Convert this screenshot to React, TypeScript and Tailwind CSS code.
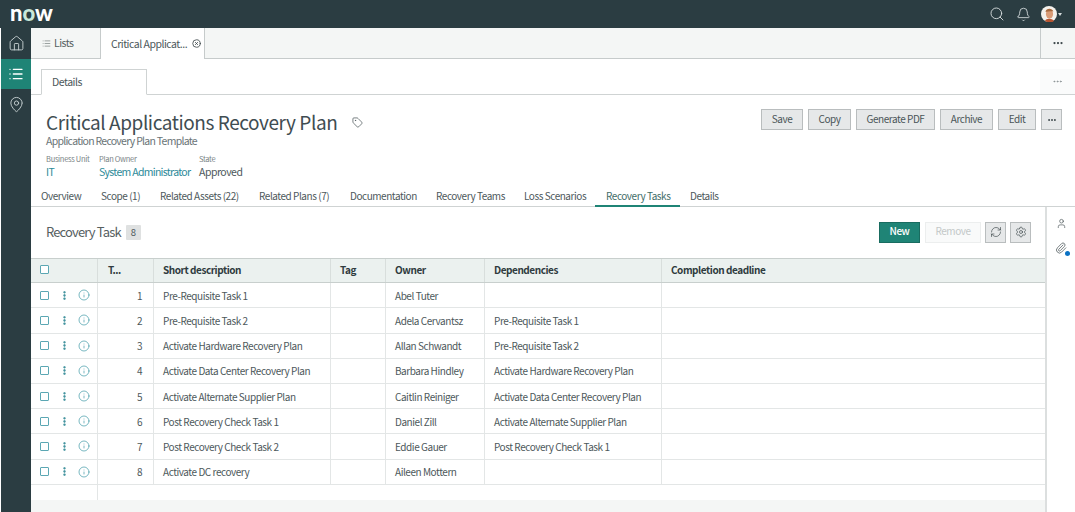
import { Home, List, MapPin, Search, Bell, RefreshCw, Settings, Tag, Paperclip, User, Info, EllipsisVertical, CircleX, Ellipsis } from "lucide-react";

const tabs = [
  { label: "Overview", cls: "w-[60px]" },
  { label: "Scope (1)", cls: "w-[59px]" },
  { label: "Related Assets (22)", cls: "w-[99px]" },
  { label: "Related Plans (7)", cls: "w-[91px]" },
  { label: "Documentation", cls: "w-[86px]" },
  { label: "Recovery Teams", cls: "w-[88px]" },
  { label: "Loss Scenarios", cls: "w-[71px]" },
  { label: "Recovery Tasks", cls: "w-[85px] pl-[11px] mr-[10px] border-b-2 border-[#1f8476] text-[#3f6d68]" },
  { label: "Details", cls: "w-[48px]" },
];

const rows = [
  ["1", "Pre-Requisite Task 1", "Abel Tuter", ""],
  ["2", "Pre-Requisite Task 2", "Adela Cervantsz", "Pre-Requisite Task 1"],
  ["3", "Activate Hardware Recovery Plan", "Allan Schwandt", "Pre-Requisite Task 2"],
  ["4", "Activate Data Center Recovery Plan", "Barbara Hindley", "Activate Hardware Recovery Plan"],
  ["5", "Activate Alternate Supplier Plan", "Caitlin Reiniger", "Activate Data Center Recovery Plan"],
  ["6", "Post Recovery Check Task 1", "Daniel Zill", "Activate Alternate Supplier Plan"],
  ["7", "Post Recovery Check Task 2", "Eddie Gauer", "Post Recovery Check Task 1"],
  ["8", "Activate DC recovery", "Aileen Mottern", ""],
];

const actions = [
  { label: "Save", w: "w-[42px]" },
  { label: "Copy", w: "w-[43px]" },
  { label: "Generate PDF", w: "w-[79px]" },
  { label: "Archive", w: "w-[53px]" },
  { label: "Edit", w: "w-[38px]" },
];

const gridCols = "grid grid-cols-[67px_56px_177px_55px_99px_177px_1fr]";

function Checkbox() {
  return <span className="block w-[9px] h-[9px] shrink-0 border-[1.5px] border-[#5ba7b3] rounded-[1px] bg-white" />;
}

function Avatar() {
  return (
    <svg width="16" height="16" viewBox="0 0 16 16">
      <circle cx="8" cy="8" r="8" fill="#f4f1ec" />
      <ellipse cx="8.5" cy="8" rx="3.6" ry="4.6" fill="#d99b76" />
      <path d="M4.5 6 C5 2 11 1.5 12.4 5.5 C10.5 5 7 5 4.5 6Z" fill="#a8683c" />
      <path d="M4 15 C5 12 11 12 13 15 A8 8 0 0 1 4 15Z" fill="#b6532f" />
    </svg>
  );
}

export default function App() {
  return (
    <div className="w-[1075px] h-[512px] overflow-hidden flex flex-col bg-white text-[#4d585b] text-[10px] tracking-[-0.45px] whitespace-nowrap font-['Noto_Sans_CJK_SC',sans-serif]">
      {/* top bar */}
      <header className="h-[28px] shrink-0 bg-[#2b3d42] flex items-center justify-between pl-[10px] pr-[13px]">
        <div className="text-white font-['Lato',sans-serif] font-black text-[22px] leading-[26px] tracking-[0px] mb-[2px]">
          n<span className="text-[#c9e8da]">o</span>w
        </div>
        <div className="flex items-center text-[#d5dcdd]">
          <Search size={16} strokeWidth={1.4} />
          <Bell size={15} strokeWidth={1.4} className="ml-[11px]" />
          <div className="flex items-center gap-[1px] ml-[10px]">
            <Avatar />
            <span className="w-0 h-0 border-x-[2.5px] border-x-transparent border-t-[3px] border-t-[#d5dcdd]" />
          </div>
        </div>
      </header>

      <div className="flex flex-1 min-h-0">
        {/* sidebar */}
        <aside className="w-[30px] shrink-0 ml-[1px] bg-[#2b3d42] flex flex-col items-center text-[#c9d2d3]">
          <div className="h-[31px] w-full flex items-center justify-center">
            <Home size={17} strokeWidth={1.3} />
          </div>
          <div className="h-[30px] w-full flex items-center justify-center bg-[#1f8476] text-white">
            <List size={16} strokeWidth={2} />
          </div>
          <div className="h-[31px] w-full flex items-center justify-center">
            <MapPin size={17} strokeWidth={1.3} />
          </div>
        </aside>

        <main className="flex-1 min-w-0 flex flex-col">
          {/* workspace tabs */}
          <div className="h-[31px] shrink-0 flex bg-[#f4f6f5] border-b border-[#c6cbcb] text-[10.5px] tracking-[-0.5px]">
            <div className="w-[69px] flex items-center pl-[11px] gap-[3px] text-[#56605f]">
              <List size={9} strokeWidth={1.5} />
              <span>Lists</span>
            </div>
            <div className="w-[105px] h-[31px] flex items-center pl-[10px] gap-[5px] bg-white border-x border-[#c6cbcb]">
              <span>Critical Applicat...</span>
              <CircleX size={9} strokeWidth={2.2} className="text-[#3a4548]" />
            </div>
            <div className="flex-1" />
            <div className="w-[35px] flex items-center justify-center border-l border-[#c6cbcb]">
              <Ellipsis size={12} strokeWidth={2.5} className="text-[#3a4548]" />
            </div>
          </div>

          {/* record tab */}
          <div className="h-[36px] shrink-0 flex items-end justify-between border-b border-[#cfd3d3] pl-[10px]">
            <div className="w-[106px] h-[26px] -mb-[1px] flex items-center pl-[10px] text-[10.5px] tracking-[-0.5px] bg-white border border-b-white border-[#cfd3d3]">
              Details
            </div>
            <div className="w-[35px] h-[25px] flex items-center justify-center bg-[#fafbfb]">
              <Ellipsis size={11} strokeWidth={2} className="text-[#8a9294]" />
            </div>
          </div>

          {/* record header */}
          <div className="h-[76px] shrink-0 flex justify-between pl-[15px] pr-[13px]">
            <div className="pt-[14px]">
              <div className="flex items-center gap-[15px]">
                <h1 className="text-[19px] leading-[26px] tracking-[-0.43px] font-normal text-[#3f4d52]">Critical Applications Recovery Plan</h1>
                <Tag size={11} strokeWidth={1.6} className="text-[#4a5558]" />
              </div>
              <div className="text-[10.5px] tracking-[-0.73px] leading-[14px] -mt-[1px] text-[#6a7477]">Application Recovery Plan Template</div>
              <div className="flex mt-[6px]">
                <div className="w-[53px]">
                  <div className="text-[7.5px] tracking-[-0.3px] leading-[10px] text-[#7a8386]">Business Unit</div>
                  <div className="text-[10.5px] tracking-[-0.7px] leading-[14px] mt-[1px] text-[#2d8a99]">IT</div>
                </div>
                <div className="w-[100px]">
                  <div className="text-[7.5px] tracking-[-0.3px] leading-[10px] text-[#7a8386]">Plan Owner</div>
                  <div className="text-[10.5px] tracking-[-0.7px] leading-[14px] mt-[1px] text-[#2d8a99]">System Administrator</div>
                </div>
                <div>
                  <div className="text-[7.5px] tracking-[-0.3px] leading-[10px] text-[#7a8386]">State</div>
                  <div className="text-[10.5px] tracking-[-0.5px] leading-[14px] mt-[1px]">Approved</div>
                </div>
              </div>
            </div>
            <div className="flex gap-[5px] pt-[14px] items-start">
              {actions.map((a) => (
                <button key={a.label} className={`${a.w} h-[21px] pb-[2px] bg-[#e6e8e9] border border-[#b9bdbe] leading-none text-[#4a5558]`}>
                  {a.label}
                </button>
              ))}
              <button className="w-[21px] h-[21px] flex items-center justify-center bg-[#e6e8e9] border border-[#b9bdbe]">
                <Ellipsis size={10} strokeWidth={2.5} className="text-[#3a4548]" />
              </button>
            </div>
          </div>

          {/* section tabs */}
          <div className="h-[36px] shrink-0 flex items-end border-b border-[#cfd3d3] pl-[10px]">
            {tabs.map((t) => (
              <div key={t.label} className={`${t.cls} shrink-0 h-[20px] -mb-[1px] leading-[18px]`}>
                {t.label}
              </div>
            ))}
          </div>

          {/* list + side rail */}
          <div className="flex-1 min-h-0 flex">
            <div className="w-[1016px] shrink-0 flex flex-col border-r-2 border-[#dcdfdf]">
              <div className="h-[50.5px] shrink-0 flex items-center justify-between pl-[15px] pr-[14px]">
                <div className="flex items-center gap-[5px]">
                  <span className="text-[13px] tracking-[-0.85px] leading-none -mt-[2px] text-[#56605f]">Recovery Task</span>
                  <span className="w-[15px] h-[15px] flex items-center justify-center bg-[#dfe1e1] text-[9.5px] rounded-[1px]">8</span>
                </div>
                <div className="flex items-center">
                  <button className="w-[41px] h-[21px] pb-[2px] bg-[#1f8476] border border-[#196c60] text-white leading-none font-medium">New</button>
                  <button className="w-[56px] h-[21px] pb-[2px] ml-[5px] bg-[#f9fafa] border border-[#eceeee] text-[#c3c8c8] leading-none">Remove</button>
                  <button className="w-[21px] h-[21px] ml-[4px] flex items-center justify-center bg-[#e6e8e9] border border-[#b9bdbe]">
                    <RefreshCw size={12} strokeWidth={1.3} className="text-[#3a4548]" />
                  </button>
                  <button className="w-[21px] h-[21px] ml-[4px] flex items-center justify-center bg-[#e6e8e9] border border-[#b9bdbe]">
                    <Settings size={12} strokeWidth={1.3} className="text-[#3a4548]" />
                  </button>
                </div>
              </div>

              <div className="flex-1 min-h-0 flex flex-col">
                <div className={`${gridCols} h-[25.7px] shrink-0 bg-[#ebf1ef] border-y border-[#c8cfcd] font-bold text-[#2f3b3e]`}>
                  <div className="flex items-center pl-[9px] pb-[1px] border-r border-[#d8dedc]"><Checkbox /></div>
                  <div className="flex items-center pl-[10px] pb-[1px] border-r border-[#d8dedc]">T...</div>
                  <div className="flex items-center pl-[9px] pb-[1px] border-r border-[#d8dedc]">Short description</div>
                  <div className="flex items-center pl-[9px] pb-[1px] border-r border-[#d8dedc]">Tag</div>
                  <div className="flex items-center pl-[9px] pb-[1px] border-r border-[#d8dedc]">Owner</div>
                  <div className="flex items-center pl-[9px] pb-[1px] border-r border-[#d8dedc]">Dependencies</div>
                  <div className="flex items-center pl-[9px] pb-[1px]">Completion deadline</div>
                </div>
                {rows.map((r) => (
                  <div key={r[0]} className={`${gridCols} h-[25.2px] shrink-0 border-b border-[#e3e6e6]`}>
                    <div className="flex items-center pl-[9px] border-r border-[#e3e6e6]">
                      <Checkbox />
                      <EllipsisVertical size={11} strokeWidth={3} className="ml-[10px] text-[#1f7f8c]" />
                      <Info size={12} strokeWidth={1.4} className="ml-[8px] text-[#3f9aa6]" />
                    </div>
                    <div className="flex items-center justify-end pr-[11px] border-r border-[#e3e6e6]">{r[0]}</div>
                    <div className="flex items-center pl-[9px] border-r border-[#e3e6e6]">{r[1]}</div>
                    <div className="border-r border-[#e3e6e6]" />
                    <div className="flex items-center pl-[9px] border-r border-[#e3e6e6]">{r[2]}</div>
                    <div className="flex items-center pl-[9px] border-r border-[#e3e6e6]">{r[3]}</div>
                    <div />
                  </div>
                ))}
                <div className="h-[15px] shrink-0">
                  <div className="w-[67px] h-full border-r border-[#e3e6e6]" />
                </div>
                <div className="flex-1 bg-[#f4f6f5]" />
              </div>
            </div>
            <div className="flex-1 flex flex-col items-center pt-[11px] gap-[13px] text-[#4d585b]">
              <User size={11} strokeWidth={1.5} />
              <div className="relative">
                <Paperclip size={12} strokeWidth={1.5} />
                <span className="absolute -right-[3px] -bottom-[2px] w-[5px] h-[5px] rounded-full bg-[#0b72c4]" />
              </div>
            </div>
          </div>
        </main>
      </div>
    </div>
  );
}
